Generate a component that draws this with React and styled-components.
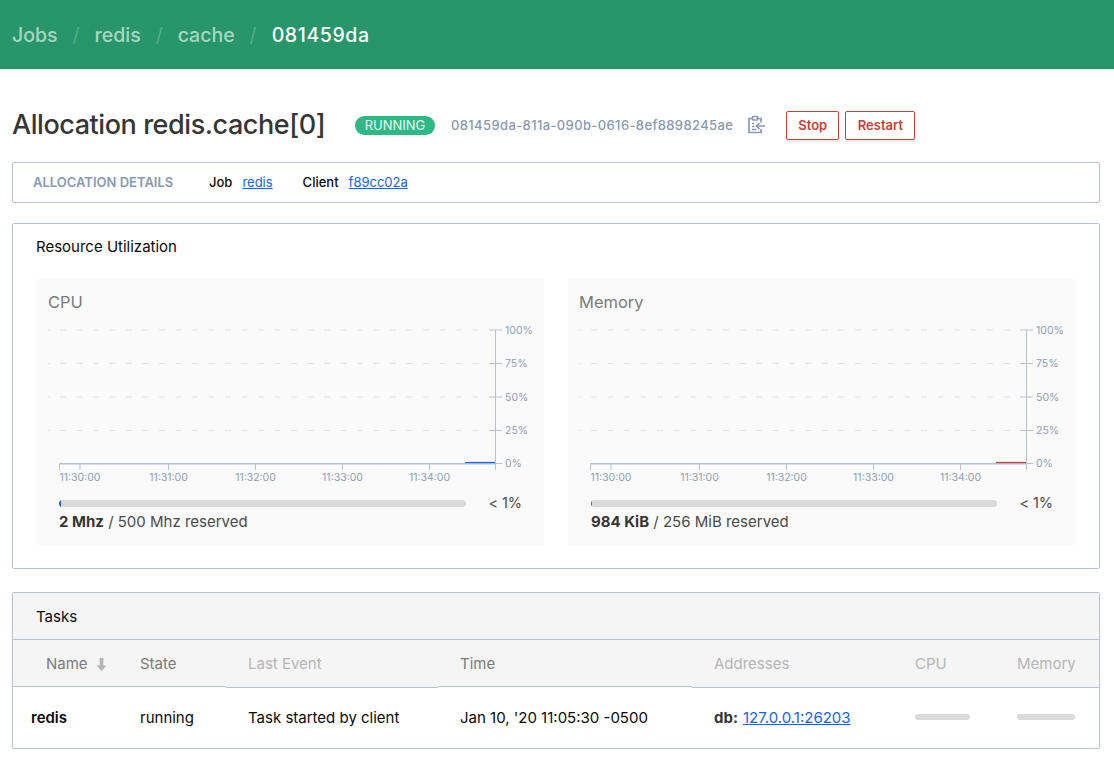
import React from 'react';
import styled, { createGlobalStyle } from 'styled-components';

const GlobalStyle = createGlobalStyle`
  html, body {
    margin: 0;
    padding: 0;
    background: #fff;
  }
  body {
    font-family: Inter, "Noto Sans", "Liberation Sans", sans-serif;
    font-size: 15px;
    color: #363636;
  }
  * {
    box-sizing: border-box;
  }
`;

// Header
const Header = styled.header`
  height: 69px;
  background: #27966b;
  display: flex;
  align-items: center;
  padding-left: 12px;
  font-size: 19.5px;
  font-weight: 500;
`;

const Crumb = styled.a`
  color: ${props => (props.$current ? '#fff' : 'rgba(255, 255, 255, 0.62)')};
  letter-spacing: ${props => (props.$current ? '0.6px' : '0')};
`;

const Slash = styled.span`
  color: rgba(255, 255, 255, 0.22);
  width: 37px;
  text-align: center;
  font-weight: 400;
`;

// Page
const Page = styled.main`
  padding: 0 14px 0 12px;
`;

const TitleRow = styled.div`
  display: flex;
  align-items: center;
  height: 42px;
  margin-top: 35px;
`;

const Title = styled.h1`
  margin: 0 0 2px;
  font-size: 27px;
  font-weight: 500;
  letter-spacing: -0.44px;
  color: #363636;
  width: 343px;
  white-space: nowrap;
`;

const Badge = styled.span`
  width: 80px;
  height: 19px;
  border-radius: 10px;
  background: #2eb886;
  color: #e9f8f2;
  font-size: 13px;
  line-height: 19px;
  text-align: center;
`;

const AllocId = styled.code`
  margin-left: 16px;
  font-family: inherit;
  font-size: 13px;
  font-weight: 500;
  letter-spacing: 0.38px;
  color: #8a99b3;
  white-space: nowrap;
`;

const CopyIcon = styled.svg`
  margin-left: 13px;
  width: 20px;
  height: 20px;
  fill: none;
  stroke: #8a99b3;
  stroke-width: 1.7;
`;

const Actions = styled.div`
  display: flex;
  gap: 6px;
  margin-left: 20px;
`;

const ActionButton = styled.button`
  height: 29px;
  padding: 0 ${props => (props.$wide ? 11.5 : 11)}px;
  background: #fff;
  border: 1px solid #c84034;
  border-radius: 2px;
  box-shadow: 0 2px 0 rgba(10, 10, 10, 0.08);
  color: #c84034;
  font-family: inherit;
  font-size: 13px;
  font-weight: 600;
`;

const Box = styled.section`
  border: 1px solid #b7c1d3;
  border-radius: 2px;
  margin-top: ${props => props.$top}px;
`;

const DetailsBar = styled(Box)`
  height: 41px;
  display: flex;
  align-items: center;
  padding: 0 0 2px 20px;
  font-size: 13px;
`;

const DetailsLabel = styled.span`
  width: 176px;
  color: #8a99b3;
  font-weight: 600;
`;

const Pair = styled.span`
  margin-right: 30px;
  color: #0a0a0a;
  font-weight: 500;
`;

const PairLink = styled.a`
  margin-left: 10px;
  color: #1563ff;
  font-weight: 400;
  text-decoration: underline;
`;

// Resource utilization
const UtilizationHead = styled.h2`
  margin: 0;
  padding: 14px 23px 0;
  height: 55px;
  font-size: 15px;
  line-height: 18px;
  font-weight: 400;
  color: #0a0a0a;
`;

const Cards = styled.div`
  display: grid;
  grid-template-columns: 508px 508px;
  gap: 24px;
  padding: 0 23px 23px;
`;

const Card = styled.div`
  height: 266px;
  background: #fafafa;
  padding: 13px 0 0 ${props => props.$inset}px;
`;

const CardTitle = styled.div`
  font-size: 16.5px;
  line-height: 20px;
  color: #7a7a7a;
`;

const ChartSvg = styled.svg`
  display: block;
  margin-top: 10px;
  width: 484px;
  height: 162px;

  text {
    font-family: Inter, "Noto Sans", sans-serif;
    font-size: 10.5px;
    fill: #8f9db6;
  }
`;

const BarRow = styled.div`
  display: flex;
  align-items: center;
  width: 474px;
  padding-left: ${props => props.$lead}px;
  margin-top: 10px;
`;

const BarTrack = styled.div`
  flex: 1;
  height: 7px;
  border-radius: 4px;
  background: #d9d9d9;
  overflow: hidden;
`;

const BarFill = styled.div`
  height: 100%;
  background: ${props => props.$color};
`;

const BarPercent = styled.span`
  margin-left: 23px;
  font-size: 14.5px;
  line-height: 18px;
  letter-spacing: -0.1px;
  color: #4a4a4a;
`;

const Usage = styled.div`
  padding-left: ${props => props.$lead}px;
  margin-top: 1px;
  font-size: 15px;
  line-height: 18px;
  color: #4a4a4a;

  strong {
    color: #363636;
    font-weight: 700;
  }
`;

// Tasks table
const TasksBox = styled(Box)`
  height: 157px;
  overflow: hidden;
`;

const TasksHead = styled.h2`
  margin: 0;
  height: 47px;
  padding: 15px 23px 0;
  background: #f5f5f5;
  border-bottom: 1px solid #b7c1d3;
  font-size: 15px;
  line-height: 18px;
  font-weight: 400;
  color: #0a0a0a;
`;

const Row = styled.div`
  display: grid;
  grid-template-columns: 105px 108px 212px 254px 201px 102px 104px;
`;

const HeadCell = styled.div`
  height: ${props => (props.$raised ? 47 : 48)}px;
  padding: 15px 0 0 ${props => props.$pad || 22}px;
  background: #f5f5f5;
  border-bottom: 1px solid #b7c1d3;
  font-size: 15px;
  line-height: 18px;
  color: ${props => (props.$muted ? '#b5b5b5' : '#7a7a7a')};
  white-space: nowrap;
`;

const SortArrow = styled.svg`
  width: 11px;
  height: 13px;
  margin-left: 8px;
  vertical-align: -2px;
  fill: #b5b5b5;
`;

const BodyCell = styled.div`
  height: 60px;
  display: flex;
  align-items: center;
  padding: 0 0 2px ${props => props.$pad || 22}px;
  font-size: 15px;
  color: #0a0a0a;
  font-weight: ${props => (props.$strong ? 600 : 400)};
  white-space: nowrap;
`;

const AddressKey = styled.strong`
  color: #363636;
  font-weight: 700;
  margin-right: 5px;
`;

const AddressLink = styled.a`
  color: #1563ff;
  text-decoration: underline;
`;

const EmptyBar = styled.div`
  width: ${props => props.$width}px;
  height: 6px;
  border-radius: 3px;
  background: #dbdbdb;
`;

const yTicks = [
  { y: 8, label: '100%' },
  { y: 41.5, label: '75%' },
  { y: 75, label: '50%' },
  { y: 108.5, label: '25%' },
  { y: 141.5, label: '0%' },
];

const xTicks = [
  { x: 32, label: '11:30:00' },
  { x: 120.5, label: '11:31:00' },
  { x: 207.5, label: '11:32:00' },
  { x: 294.5, label: '11:33:00' },
  { x: 381.5, label: '11:34:00' },
];

const AXIS = '#b7c1d3';

const Chart = ({ color }) => (
  <ChartSvg viewBox="0 0 484 162">
    {yTicks.slice(0, 4).map(t => (
      <line
        key={t.y}
        x1="0"
        x2="441"
        y1={t.y}
        y2={t.y}
        stroke="#dde1ea"
        strokeDasharray="6 10.5"
        strokeDashoffset="4.5"
      />
    ))}
    <line x1="11.5" x2="447.5" y1="141.7" y2="141.7" stroke={AXIS} strokeWidth="1.5" />
    <line x1="447.5" x2="447.5" y1="8" y2="148" stroke={AXIS} />
    <line x1="11.5" x2="11.5" y1="141.5" y2="148" stroke={AXIS} />
    {xTicks.map(t => (
      <g key={t.label}>
        <line x1={t.x} x2={t.x} y1="141.5" y2="148" stroke={AXIS} />
        <text x={t.x} y="159" textAnchor="middle">{t.label}</text>
      </g>
    ))}
    {yTicks.map(t => (
      <g key={t.label}>
        <line x1="441" x2="454" y1={t.y} y2={t.y} stroke={AXIS} />
        <text x="457" y={t.y + 3.5}>{t.label}</text>
      </g>
    ))}
    <line x1="417" x2="447" y1="140.5" y2="140.5" stroke={color} strokeWidth="1.2" />
  </ChartSvg>
);

const UtilizationCard = ({ title, color, fill, used, reserved, inset, lead }) => (
  <Card $inset={inset}>
    <CardTitle>{title}</CardTitle>
    <Chart color={color} />
    <BarRow $lead={lead}>
      <BarTrack>
        <BarFill $color={color} style={{ width: fill }} />
      </BarTrack>
      <BarPercent>&lt; 1%</BarPercent>
    </BarRow>
    <Usage $lead={lead}><strong>{used}</strong> / {reserved} reserved</Usage>
  </Card>
);

const App = () => (
  <>
    <GlobalStyle />
    <Header>
      <Crumb>Jobs</Crumb>
      <Slash>/</Slash>
      <Crumb>redis</Crumb>
      <Slash>/</Slash>
      <Crumb>cache</Crumb>
      <Slash>/</Slash>
      <Crumb $current>081459da</Crumb>
    </Header>
    <Page>
      <TitleRow>
        <Title>Allocation redis.cache[0]</Title>
        <Badge>RUNNING</Badge>
        <AllocId>081459da-811a-090b-0616-8ef8898245ae</AllocId>
        <CopyIcon viewBox="0 0 20 20">
          <path d="M12 3.5h3v4M15 14v3.5H3V3.5h3" />
          <rect x="6.5" y="1.5" width="5" height="3.5" rx="0.6" />
          <path d="M6 8.5h2.2M6 11.5h2.2M6 14.5h4.5" />
          <path d="M19 11h-8M13.5 8l-3 3 3 3" />
        </CopyIcon>
        <Actions>
          <ActionButton>Stop</ActionButton>
          <ActionButton $wide>Restart</ActionButton>
        </Actions>
      </TitleRow>

      <DetailsBar $top={16}>
        <DetailsLabel>ALLOCATION DETAILS</DetailsLabel>
        <Pair>Job<PairLink>redis</PairLink></Pair>
        <Pair>Client<PairLink>f89cc02a</PairLink></Pair>
      </DetailsBar>

      <Box $top={20}>
        <UtilizationHead>Resource Utilization</UtilizationHead>
        <Cards>
          <UtilizationCard title="CPU" inset={12} lead={11} color="#1563ff" fill="2px" used="2 Mhz" reserved="500 Mhz" />
          <UtilizationCard title="Memory" inset={11} lead={12} color="#c84034" fill="1px" used="984 KiB" reserved="256 MiB" />
        </Cards>
      </Box>

      <TasksBox $top={23}>
        <TasksHead>Tasks</TasksHead>
        <Row>
          <HeadCell $pad={33} $raised>
            Name
            <SortArrow viewBox="0 0 11 13">
              <path d="M3.7 0h3.6v7.5h3.2L5.5 13 .5 7.5h3.2z" />
            </SortArrow>
          </HeadCell>
          <HeadCell $raised>State</HeadCell>
          <HeadCell $muted>Last Event</HeadCell>
          <HeadCell $raised>Time</HeadCell>
          <HeadCell $muted>Addresses</HeadCell>
          <HeadCell $muted>CPU</HeadCell>
          <HeadCell $muted>Memory</HeadCell>
        </Row>
        <Row>
          <BodyCell $pad={18} $strong>redis</BodyCell>
          <BodyCell>running</BodyCell>
          <BodyCell>Task started by client</BodyCell>
          <BodyCell>Jan 10, '20 11:05:30 -0500</BodyCell>
          <BodyCell>
            <AddressKey>db:</AddressKey>
            <AddressLink>127.0.0.1:26203</AddressLink>
          </BodyCell>
          <BodyCell><EmptyBar $width={55} /></BodyCell>
          <BodyCell><EmptyBar $width={58} /></BodyCell>
        </Row>
      </TasksBox>
    </Page>
  </>
);

export default App;
